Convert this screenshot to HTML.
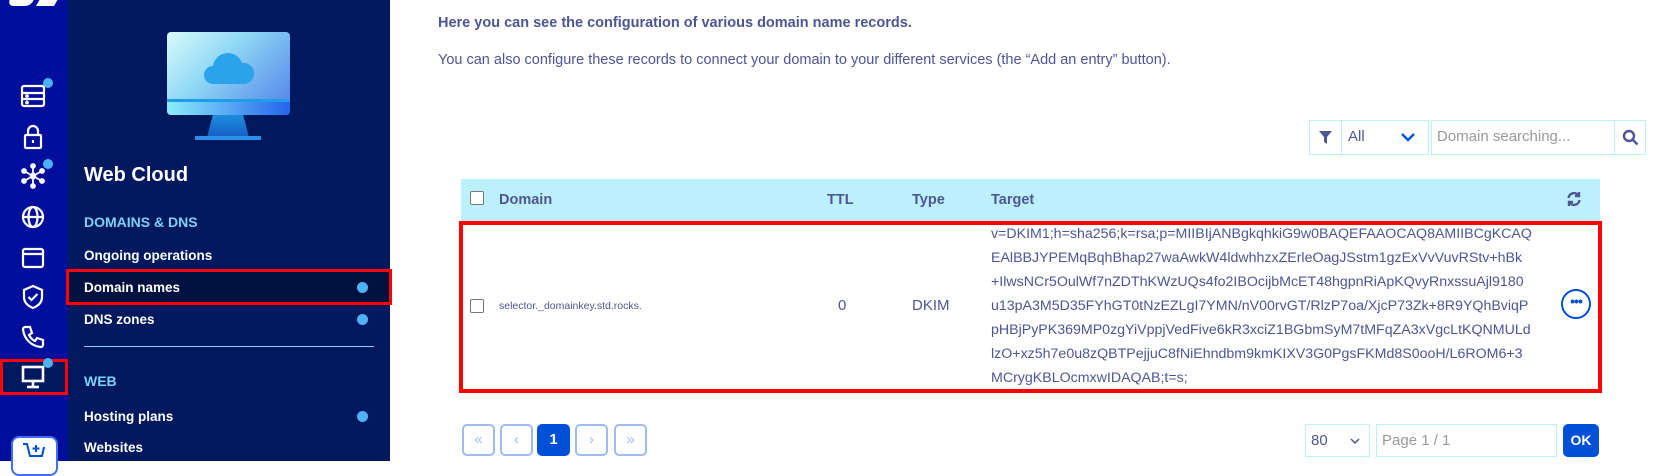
<!DOCTYPE html>
<html><head><meta charset="utf-8"><style>
*{box-sizing:border-box;margin:0;padding:0}
body{width:1667px;height:461px;overflow:hidden;background:#fff;font-family:"Liberation Sans",sans-serif;position:relative;color:#4d5693}
.a{position:absolute}
#rail{left:0;top:0;width:68px;height:461px;background:#000e9c}
#panel{left:68px;top:0;width:322px;height:461px;background:#00185e}
.nav{position:absolute;left:84px;color:#fff;font-size:13.5px;font-weight:bold}
.sec{position:absolute;left:84px;color:#7fd1f7;font-size:14px;font-weight:bold}
.dot{position:absolute;left:357px;width:11px;height:11px;border-radius:50%;background:#4eb3f5}
.ic{position:absolute;left:20px;width:26px;height:26px}
.rd{position:absolute;width:10px;height:10px;border-radius:50%;background:#4eb3f5}
.tl{position:absolute;left:991px;font-size:14.2px;color:#4d5693;white-space:nowrap}
.pg{position:absolute;top:424px;width:33px;height:32px;border:2px solid #9cbcf2;border-radius:5px;color:#9cbcf2;font-size:15px;text-align:center;line-height:27px}
.cb{position:absolute;width:14px;height:14px;border:1.5px solid #777;border-radius:2px;background:#fff}
.th{position:absolute;top:192px;font-size:14.5px;font-weight:bold;color:#4d5693}
</style></head><body>
<div id="rail" class="a"></div>
<div id="panel" class="a"></div>
<!-- logo fragment -->
<div class="a" style="left:10px;top:-8px;width:24px;height:14px;background:#fff;border-radius:0 0 6px 6px;transform:skewX(-20deg)"></div>
<div class="a" style="left:40px;top:-8px;width:18px;height:14px;background:#fff;transform:skewX(-30deg)"></div>
<!-- rail icons -->
<svg class="ic" style="top:83px" viewBox="0 0 26 26" fill="none" stroke="#fff" stroke-width="2.2"><rect x="2" y="3" width="22" height="20" rx="2"/><line x1="2" y1="10" x2="24" y2="10"/><line x1="2" y1="16" x2="24" y2="16"/><circle cx="7" cy="13" r=".8"/><circle cx="7" cy="19.5" r=".8"/></svg>
<div class="rd" style="left:43px;top:78px"></div>
<svg class="ic" style="top:124px" viewBox="0 0 26 26" fill="none" stroke="#fff" stroke-width="2.2"><rect x="5" y="11" width="16" height="13" rx="1"/><path d="M8 11V7a5 5 0 0 1 10 0v4"/><line x1="13" y1="16" x2="13" y2="19"/></svg>
<svg class="ic" style="top:163px" viewBox="0 0 26 26" fill="#fff" stroke="#fff" stroke-width="1.8"><circle cx="13" cy="13" r="2.5"/><line x1="13" y1="3" x2="13" y2="23"/><line x1="4" y1="8" x2="22" y2="18"/><line x1="4" y1="18" x2="22" y2="8"/><circle cx="13" cy="3" r="2"/><circle cx="13" cy="23" r="2"/><circle cx="4" cy="8" r="2"/><circle cx="22" cy="18" r="2"/><circle cx="4" cy="18" r="2"/><circle cx="22" cy="8" r="2"/></svg>
<div class="rd" style="left:43px;top:159px"></div>
<svg class="ic" style="top:204px" viewBox="0 0 26 26" fill="none" stroke="#fff" stroke-width="2.2"><circle cx="13" cy="13" r="10"/><ellipse cx="13" cy="13" rx="4.5" ry="10"/><line x1="3" y1="13" x2="23" y2="13"/></svg>
<svg class="ic" style="top:244px" viewBox="0 0 26 26" fill="none" stroke="#fff" stroke-width="2.2"><rect x="3" y="5" width="20" height="18" rx="2"/><line x1="3" y1="10" x2="23" y2="10"/></svg>
<svg class="ic" style="top:284px" viewBox="0 0 26 26" fill="none" stroke="#fff" stroke-width="2.2"><path d="M13 2l9 4v7c0 6-4 9-9 11-5-2-9-5-9-11V6z"/><path d="M8.5 13l3 3 6-6"/></svg>
<svg class="ic" style="top:324px" viewBox="0 0 26 26" fill="none" stroke="#fff" stroke-width="2.2"><path d="M5 3l5 0 2 6-3 2c1.5 3 3.5 5 6 6l2-3 6 2v5c0 1-1 2-2 2C11 22 4 15 3 5c0-1 1-2 2-2z"/></svg>
<div class="a" style="left:0;top:359px;width:68px;height:36px;border:3px solid #f00;background:#00185e"></div>
<svg class="ic" style="top:364px" viewBox="0 0 26 26" fill="none" stroke="#fff" stroke-width="2.6"><rect x="3" y="3" width="20" height="14"/><line x1="13" y1="17" x2="13" y2="22"/><line x1="7" y1="23" x2="19" y2="23"/></svg>
<div class="rd" style="left:43px;top:358px"></div>
<div class="a" style="left:11px;top:436px;width:47px;height:40px;background:#fff;border:2px solid #3f6ff0;border-radius:8px"></div>
<svg class="a" style="left:22px;top:442px;width:24px;height:20px" viewBox="0 0 24 20" fill="none" stroke="#0050d7" stroke-width="2"><path d="M1 2h4l3 12h12l2-9"/><path d="M14 3v7M10.5 6.5h7"/></svg>
<!-- illustration -->
<div class="a" style="left:167px;top:32px;width:123px;height:83px;border-radius:4px;background:linear-gradient(135deg,#d8fbfb 0%,#8fd7f5 40%,#4f7de8 100%)"></div>
<div class="a" style="left:167px;top:99px;width:123px;height:3px;background:#1e9ee8"></div>
<div class="a" style="left:167px;top:102px;width:123px;height:13px;border-radius:0 0 4px 4px;background:linear-gradient(90deg,#8beefa,#2563eb)"></div>
<div class="a" style="left:207px;top:115px;width:42px;height:22px;background:linear-gradient(#1a8ddc,#175fc8);clip-path:polygon(14% 0,86% 0,100% 100%,0 100%)"></div>
<div class="a" style="left:195px;top:136px;width:66px;height:4px;background:#2a8fe6"></div>
<svg class="a" style="left:203px;top:48px;width:52px;height:37px" viewBox="0 0 52 37"><path d="M10 36a9 9 0 0 1 0-18 15 15 0 0 1 29-3 10 10 0 0 1 3 21z" fill="#2aa3eb"/></svg>
<div class="a" style="left:84px;top:164px;color:#fff;font-size:20px;font-weight:bold">Web Cloud</div>
<div class="sec" style="top:214px">DOMAINS &amp; DNS</div>
<div class="nav" style="top:248px">Ongoing operations</div>
<div class="a" style="left:66px;top:269px;width:326px;height:36px;border:3px solid #f00;background:#00103f"></div>
<div class="nav" style="top:280px">Domain names</div><div class="dot" style="top:282px"></div>
<div class="nav" style="top:312px">DNS zones</div><div class="dot" style="top:314px"></div>
<div class="a" style="left:84px;top:346px;width:290px;height:1px;background:#7fd1f7"></div>
<div class="sec" style="top:373px">WEB</div>
<div class="nav" style="top:409px">Hosting plans</div><div class="dot" style="top:411px"></div>
<div class="nav" style="top:440px">Websites</div>
<!-- main -->
<div class="a" style="left:438px;top:15px;font-size:14.5px;font-weight:bold">Here you can see the configuration of various domain name records.</div>
<div class="a" style="left:438px;top:52px;font-size:14.5px">You can also configure these records to connect your domain to your different services (the “Add an entry” button).</div>
<!-- filter -->
<div class="a" style="left:1309px;top:120px;width:120px;height:35px;border:1px solid #bdf0fd"></div>
<div class="a" style="left:1341px;top:120px;width:1px;height:35px;background:#bdf0fd"></div>
<svg class="a" style="left:1318px;top:130px;width:15px;height:15px" viewBox="0 0 15 15"><path d="M1 1h13L9 7v7l-3-2V7z" fill="#4d5693"/></svg>
<div class="a" style="left:1348px;top:128px;font-size:15px">All</div>
<svg class="a" style="left:1400px;top:131px;width:16px;height:12px" viewBox="0 0 16 12" fill="none" stroke="#0050d7" stroke-width="2.4"><path d="M2 3l6 6 6-6"/></svg>
<div class="a" style="left:1431px;top:120px;width:215px;height:35px;border:1px solid #bdf0fd"></div>
<div class="a" style="left:1614px;top:120px;width:1px;height:35px;background:#bdf0fd"></div>
<div class="a" style="left:1437px;top:128px;font-size:15px;color:#999">Domain searching...</div>
<svg class="a" style="left:1622px;top:129px;width:17px;height:17px" viewBox="0 0 17 17" fill="none" stroke="#4d5693" stroke-width="2.4"><circle cx="7" cy="7" r="5"/><path d="M11 11l4.5 4.5"/></svg>
<!-- table -->
<div class="a" style="left:461px;top:179px;width:1139px;height:42px;background:#bdf0fd"></div>
<div class="cb" style="left:470px;top:191px"></div>
<div class="th" style="left:499px">Domain</div>
<div class="th" style="left:827px">TTL</div>
<div class="th" style="left:912px">Type</div>
<div class="th" style="left:991px">Target</div>
<svg class="a" style="left:1566px;top:191px;width:16px;height:16px" viewBox="0 0 16 16" fill="none" stroke="#4d5693" stroke-width="2.4"><path d="M2.5 7a5.5 5.5 0 0 1 10-2.5M13.5 9a5.5 5.5 0 0 1-10 2.5"/><path d="M13 1v4H9M3 15v-4h4"/></svg>
<div class="a" style="left:459px;top:221px;width:1143px;height:172px;border:4px solid #f00"></div>
<div class="cb" style="left:470px;top:299px"></div>
<div class="a" style="left:499px;top:300px;font-size:10.5px">selector._domainkey.std.rocks.</div>
<div class="a" style="left:838px;top:297px;font-size:15px">0</div>
<div class="a" style="left:912px;top:297px;font-size:15px">DKIM</div>
<div class="tl" style="top:226px">v=DKIM1;h=sha256;k=rsa;p=MIIBIjANBgkqhkiG9w0BAQEFAAOCAQ8AMIIBCgKCAQ</div>
<div class="tl" style="top:250px">EAlBBJYPEMqBqhBhap27waAwkW4ldwhhzxZErleOagJSstm1gzExVvVuvRStv+hBk</div>
<div class="tl" style="top:274px">+IlwsNCr5OulWf7nZDThKWzUQs4fo2IBOcijbMcET48hgpnRiApKQvyRnxssuAjl9180</div>
<div class="tl" style="top:298px">u13pA3M5D35FYhGT0tNzEZLgI7YMN/nV00rvGT/RlzP7oa/XjcP73Zk+8R9YQhBviqP</div>
<div class="tl" style="top:322px">pHBjPyPK369MP0zgYiVppjVedFive6kR3xciZ1BGbmSyM7tMFqZA3xVgcLtKQNMULd</div>
<div class="tl" style="top:346px">lzO+xz5h7e0u8zQBTPejjuC8fNiEhndbm9kmKIXV3G0PgsFKMd8S0ooH/L6ROM6+3</div>
<div class="tl" style="top:370px">MCrygKBLOcmxwIDAQAB;t=s;</div>
<div class="a" style="left:1561px;top:289px;width:30px;height:30px;border:2px solid #0050d7;border-radius:50%;text-align:center;color:#0050d7;font-size:14px;font-weight:bold;line-height:20px;letter-spacing:-1px">•••</div>
<!-- pagination -->
<div class="pg" style="left:462px">«</div>
<div class="pg" style="left:500px">‹</div>
<div class="pg" style="left:537px;background:#0050d7;border-color:#0050d7;color:#fff;font-weight:bold">1</div>
<div class="pg" style="left:575px">›</div>
<div class="pg" style="left:614px">»</div>
<div class="a" style="left:1305px;top:424px;width:65px;height:33px;border:1px solid #bdf0fd"></div>
<div class="a" style="left:1311px;top:432px;font-size:15px">80</div>
<svg class="a" style="left:1350px;top:437px;width:10px;height:8px" viewBox="0 0 10 8" fill="none" stroke="#4d5693" stroke-width="1.5"><path d="M1 2l4 4 4-4"/></svg>
<div class="a" style="left:1376px;top:424px;width:181px;height:33px;border:1px solid #bdf0fd"></div>
<div class="a" style="left:1382px;top:432px;font-size:15px;color:#999">Page 1 / 1</div>
<div class="a" style="left:1563px;top:424px;width:36px;height:33px;background:#0050d7;border-radius:5px;color:#fff;font-weight:bold;font-size:14px;text-align:center;line-height:33px">OK</div>
</body></html>
